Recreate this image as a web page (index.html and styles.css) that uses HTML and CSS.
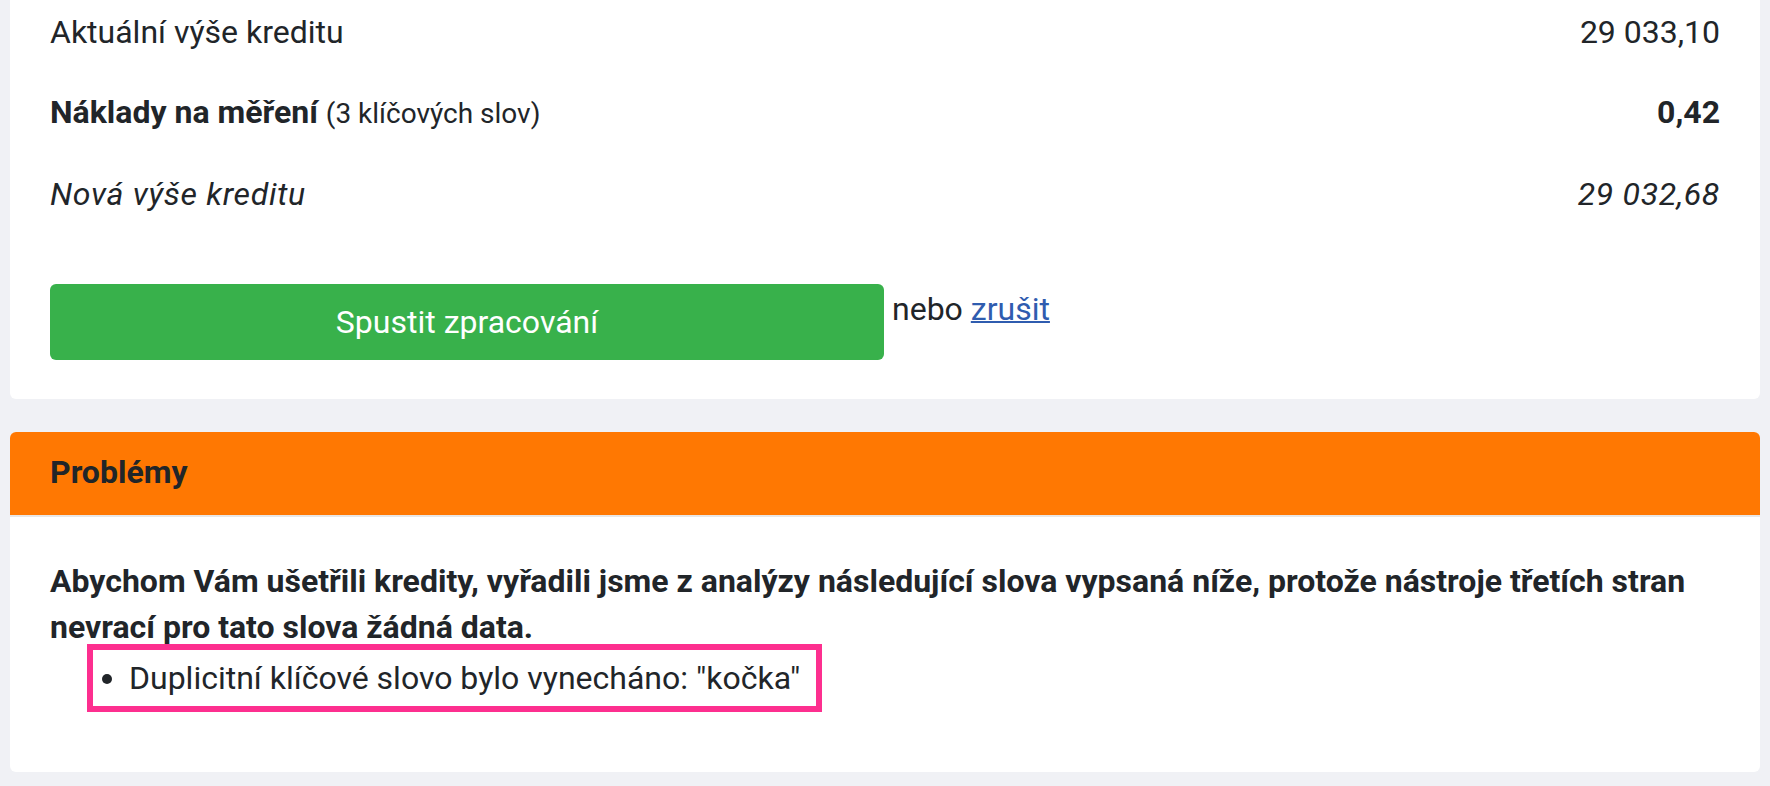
FILE: index.html
```html
<!DOCTYPE html>
<html lang="cs">
<head>
<meta charset="UTF-8">
<meta name="viewport" content="width=device-width, initial-scale=1.0">
<title>Spuštění měření</title>
<link rel="stylesheet" href="styles.css">
</head>
<body>

<div id="page">

    <div class="card">
        <div class="cardBody summary">
            <div class="creditRow">
                <span>Aktuální výše kreditu</span>
                <span>29 033,10</span>
            </div>
            <div class="creditRow costRow">
                <span><strong>Náklady na měření</strong> <small>(3 klíčových slov)</small></span>
                <strong>0,42</strong>
            </div>
            <div class="creditRow newRow">
                <span>Nová výše kreditu</span>
                <span>29 032,68</span>
            </div>

            <div class="actions">
                <button class="startButton">Spustit zpracování</button>
                <span class="cancelText">nebo <a href="#">zrušit</a></span>
            </div>
        </div>
    </div>

    <div class="card problems">
        <div class="cardHeader">Problémy</div>
        <div class="cardBody">
            <p class="problemIntro">Abychom Vám ušetřili kredity, vyřadili jsme z analýzy následující slova vypsaná níže, protože nástroje třetích stran nevrací pro tato slova žádná data.</p>
            <div class="highlight">
                <ul class="problemList">
                    <li>Duplicitní klíčové slovo bylo vynecháno: "kočka"</li>
                </ul>
            </div>
        </div>
    </div>

</div>

</body>
</html>
```

FILE: styles.css
```css
body {
    font-family: Roboto, 'Liberation Sans', sans-serif;
    font-size: 32px;
    margin: 0;
    background-color: #f0f1f5;
    color: #212529;
}

#page {
    margin-top: -30px;
    padding: 0 10px;
}

.card {
    background-color: #fff;
    border-radius: 6px;
    overflow: hidden;
}

.card + .card {
    margin-top: 33px;
}

.cardBody {
    padding: 41px 40px 42px;
}

.summary {
    padding-top: 22px;
    padding-bottom: 39px;
}

.creditRow {
    display: flex;
    justify-content: space-between;
    padding: 20px 0;
    line-height: 40px;
}

.creditRow strong {
    font-weight: 700;
}

.creditRow small {
    font-size: 28px;
}

.newRow {
    font-style: italic;
    letter-spacing: 0.7px;
}

.actions {
    display: flex;
    align-items: flex-start;
    margin-top: 50px;
}

.startButton {
    width: 834px;
    height: 76px;
    font-family: inherit;
    font-size: 32px;
    color: #fff;
    background-color: #38b14b;
    border: none;
    border-radius: 6px;
    cursor: pointer;
}

.cancelText {
    margin-left: 8px;
    line-height: 50px;
}

.cancelText a {
    color: #2f5caf;
    text-decoration-thickness: 2px;
}

.cardHeader {
    padding: 19px 40px 21px;
    line-height: 43px;
    font-weight: 700;
    background-color: #ff7802;
    border-bottom: 2px solid #e9e7e5;
}

.problemIntro {
    margin: 0;
    line-height: 46px;
    font-weight: 700;
}

.highlight {
    display: inline-block;
    margin: -6px 0 18px 37px;
    border: 6px solid #fd2f8f;
    padding: 0 16px 0 36px;
}

.problemList {
    margin: 0;
    padding: 0;
}

.problemList li {
    line-height: 56px;
}
```
